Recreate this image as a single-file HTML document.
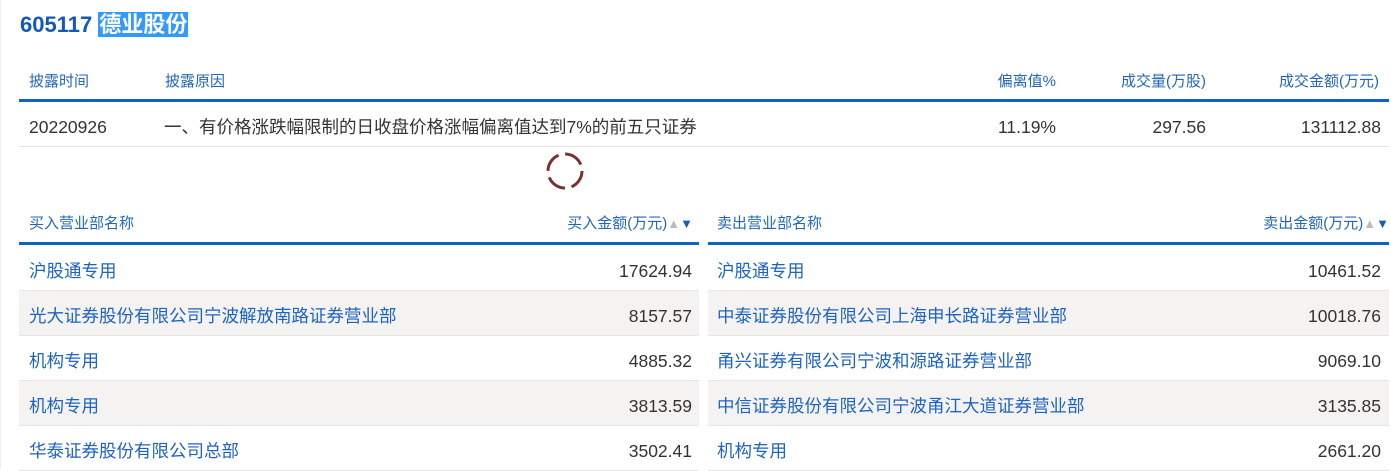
<!DOCTYPE html>
<html><head><meta charset="utf-8"><style>
body{margin:0;width:1391px;height:469px;overflow:hidden;background:#fff;font-family:"Liberation Sans","Noto Sans CJK SC",sans-serif;position:relative;border-left:1px solid #eee;box-sizing:border-box}
.a{position:absolute;white-space:nowrap}
.t{left:19px;top:10px;font-size:22px;font-weight:bold;color:#1658b8;line-height:30px}
.t span{background:#3399ff;color:#fff;padding:0 1px}
.h{font-size:15px;color:#2366b8;line-height:20px}
.d{font-size:17.5px;color:#333;line-height:22px}
.b{color:#1d63c4}
.line{position:absolute;height:3px;background:#0e63c8}
.row{position:absolute;height:44px;border-bottom:1px solid #e6e6e6}
.g{background:#f4f3f2}
.tri{font-size:13px}
.tri i{color:#bbb;font-style:normal}.tri b{color:#1a5cb8;font-weight:normal}
</style></head><body>
<div class="a t">605117 <span>德业股份</span></div>
<div class="a h" style="left:28px;top:72px">披露时间</div>
<div class="a h" style="left:164px;top:72px">披露原因</div>
<div class="a h" style="right:335px;top:72px">偏离值%</div>
<div class="a h" style="right:185px;top:72px">成交量(万股)</div>
<div class="a h" style="right:12px;top:72px">成交金额(万元)</div>
<div class="line" style="left:18px;width:1370px;top:99px"></div>
<div class="row" style="left:18px;width:1370px;top:102px"></div>
<div class="a d" style="left:28px;top:116px">20220926</div>
<div class="a d" style="left:163px;top:116px">一、有价格涨跌幅限制的日收盘价格涨幅偏离值达到7%的前五只证券</div>
<div class="a d" style="right:335px;top:116px">11.19%</div>
<div class="a d" style="right:185px;top:116px">297.56</div>
<div class="a d" style="right:10px;top:116px">131112.88</div>
<svg class="a" style="left:544px;top:151px" width="40" height="40"><circle cx="20" cy="20" r="17" fill="none" stroke="#6b1a1a" stroke-width="3" stroke-dasharray="20 6.7" opacity="0.9"/></svg>
<div class="a h" style="left:28px;top:214px">买入营业部名称</div>
<div class="a h" style="right:698px;top:214px">买入金额(万元)<span class="tri"><i>▲</i><b>▼</b></span></div>
<div class="a h" style="left:716px;top:214px">卖出营业部名称</div>
<div class="a h" style="right:2px;top:214px">卖出金额(万元)<span class="tri"><i>▲</i><b>▼</b></span></div>
<div class="line" style="left:18px;width:680px;top:242px"></div>
<div class="line" style="left:707px;width:681px;top:242px"></div>
<div id="rows"></div>
<script>
var L=[["沪股通专用","17624.94"],["光大证券股份有限公司宁波解放南路证券营业部","8157.57"],["机构专用","4885.32"],["机构专用","3813.59"],["华泰证券股份有限公司总部","3502.41"]];
var R=[["沪股通专用","10461.52"],["中泰证券股份有限公司上海申长路证券营业部","10018.76"],["甬兴证券有限公司宁波和源路证券营业部","9069.10"],["中信证券股份有限公司宁波甬江大道证券营业部","3135.85"],["机构专用","2661.20"]];
var h="";for(var i=0;i<5;i++){var y=246+i*45,g=i%2?" g":"";
h+='<div class="row'+g+'" style="left:18px;width:680px;top:'+y+'px"></div><div class="row'+g+'" style="left:707px;width:681px;top:'+y+'px"></div>';
h+='<div class="a d b" style="left:28px;top:'+(y+14)+'px">'+L[i][0]+'</div><div class="a d" style="right:699px;top:'+(y+14)+'px">'+L[i][1]+'</div>';
h+='<div class="a d b" style="left:716px;top:'+(y+14)+'px">'+R[i][0]+'</div><div class="a d" style="right:10px;top:'+(y+14)+'px">'+R[i][1]+'</div>';}
document.getElementById("rows").innerHTML=h;
</script>
</body></html>
